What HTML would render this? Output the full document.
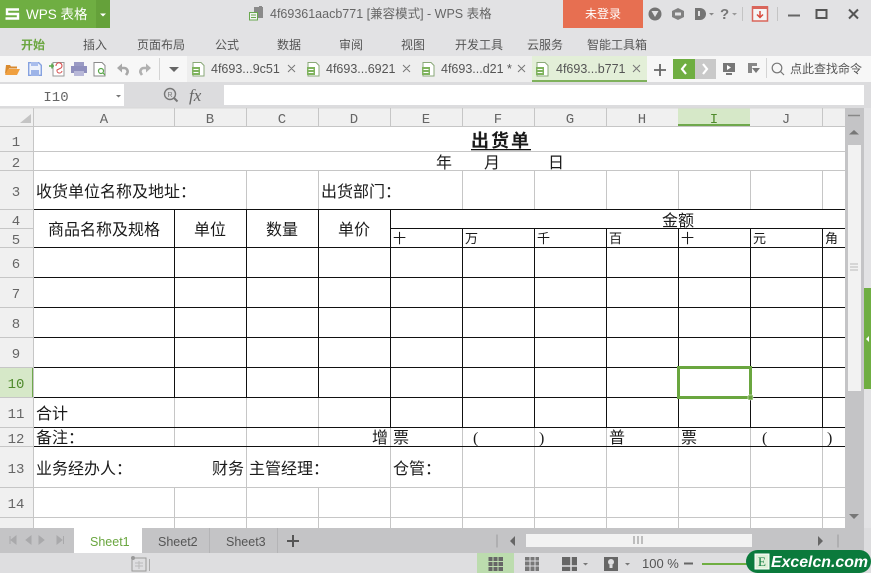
<!DOCTYPE html>
<html lang="zh-CN"><head><meta charset="utf-8"><style>
html,body{margin:0;padding:0;background:#e2e2e4}
svg{display:block}
.s{font-family:"Liberation Sans","Noto Sans CJK SC",sans-serif}
.c{font-family:"Liberation Serif","WenQuanYi Zen Hei","Noto Sans CJK SC",sans-serif;font-size:16px;fill:#1a1a1a}
.m{font-family:"Liberation Mono",monospace;fill:#666;font-size:14px;text-anchor:middle}
.rb{font-family:"Liberation Sans","Noto Sans CJK SC",sans-serif;font-size:12px;fill:#555}
.tab{font-family:"Liberation Sans",sans-serif;font-size:12.5px;fill:#555}
.st{font-family:"Liberation Sans",sans-serif;font-size:12.5px;fill:#555}
.g line{stroke:#c6c6c6;stroke-width:1}
.k line{stroke:#111;stroke-width:1}
</style></head><body>
<svg width="871" height="573" viewBox="0 0 871 573" xmlns="http://www.w3.org/2000/svg">
<rect width="871" height="573" fill="#e2e2e4"/>
<!-- title -->
<rect width="110" height="28" fill="#6fae42"/><rect x="96" width="14" height="28" fill="#65a13a"/>
<path d="M19 9.500H7v4.500h11v4.500H5.500" fill="none" stroke="#fff" stroke-width="2.400"/>
<text x="26" y="19" class="s" font-size="13.500" fill="#fff">WPS 表格</text>
<path d="M100 13.500h6l-3 3z" fill="#fff"/>
<path d="M254 7h5v-1h3v1h1v11h-9z" fill="#8a8a8a"/><rect x="249.500" y="12.500" width="8" height="7.500" fill="#f4f4f4" stroke="#6aa84f"/><path d="M251 15h5M251 17.500h5" stroke="#6aa84f"/>
<text x="270" y="18" class="s" font-size="12.500" fill="#666">4f69361aacb771 [兼容模式] - WPS 表格</text>
<rect x="563" width="80" height="28" fill="#e76f51"/>
<text x="585" y="18" class="s" font-size="12" fill="#fff">未登录</text>
<circle cx="655" cy="14" r="6.500" fill="#747474"/><path d="M651.500 11h7l-3.500 6z" fill="#e2e2e4"/>
<path d="M678 8l6 3v6l-6 3-6-3v-6z" fill="#808080"/><rect x="675" y="12.500" width="6" height="3" fill="#e2e2e4"/>
<path d="M695 8h5a6 6 0 0 1 0 12h-5z" fill="#747474"/><path d="M699 11v5" stroke="#e2e2e4" stroke-width="2"/><path d="M709 13h5l-2.500 2.500z" fill="#888"/>
<text x="720" y="19" class="s" font-size="15" font-weight="bold" fill="#777">?</text><path d="M732 13h5l-2.500 2.500z" fill="#999"/>
<path d="M742.500 7v14" stroke="#c4c4c4"/>
<rect x="752.500" y="7" width="15" height="14" fill="#f5f5f5" stroke="#d9655a" stroke-width="1.500"/><rect x="752" y="6" width="16" height="3" fill="#d9655a"/><path d="M760 11v6M757 14.500l3 3 3-3" fill="none" stroke="#d9483b" stroke-width="1.500"/>
<path d="M777.500 7v14" stroke="#c4c4c4"/>
<path d="M788 15.500h12" stroke="#666" stroke-width="2"/>
<rect x="816.500" y="10" width="10" height="8" fill="none" stroke="#555" stroke-width="2"/>
<path d="M849 9.500l9 9M858 9.500l-9 9" stroke="#555" stroke-width="2"/>
<!-- ribbon -->
<g class="rb"><text x="21" y="49" style="fill:#6aa63f;font-weight:bold">开始</text>
<text x="83" y="49">插入</text><text x="137" y="49">页面布局</text><text x="215" y="49">公式</text><text x="277" y="49">数据</text><text x="339" y="49">审阅</text><text x="401" y="49">视图</text><text x="455" y="49">开发工具</text><text x="527" y="49">云服务</text><text x="587" y="49">智能工具箱</text></g>
<!-- toolbar -->
<rect y="56" width="871" height="26" fill="#f7f7f7"/>
<rect x="187" y="56" width="345" height="26" fill="#eeeeee"/>
<rect x="647" y="56" width="224" height="26" fill="#f7f7f7"/>
<rect x="532" y="56" width="115" height="26" fill="#e3efd8"/><rect x="532" y="80" width="115" height="2" fill="#7fb15c"/>
<path d="M6 65h4l1 1.500h6v2H9l-2 5H5z" fill="#d98a2e"/><path d="M8 69h12l-3 6H5z" fill="#f0a040"/>
<path d="M28.700 62.700h10l2.600 2.600V75.300H28.700z" fill="#eef2fb" stroke="#86a2e0" stroke-width="1.400"/><rect x="31" y="62" width="7" height="4" fill="#a9bdec"/><rect x="31" y="70" width="8" height="6" fill="#9db4e8"/>
<path d="M53 62.500h11V76H53z" fill="#fff" stroke="#999"/><path d="M49 66h5M52 63.500v5" stroke="#5aa84a" stroke-width="1.500"/><path d="M56 66a3 3 0 1 1 5 2l-4 2a2.500 2.500 0 1 0 5 1" fill="none" stroke="#d64a4a"/>
<rect x="74" y="62" width="10" height="4" fill="#9a9ac4"/><rect x="71" y="66" width="16" height="7" fill="#8f8fbd"/><rect x="74" y="71" width="10" height="5" fill="#b8b8d8"/>
<path d="M94 62.500h8l3 3V76H94z" fill="#fff" stroke="#8a8a8a"/><circle cx="101" cy="71" r="2.500" fill="none" stroke="#5aa84a" stroke-width="1.200"/><path d="M103 73l2 2" stroke="#5aa84a" stroke-width="1.200"/>
<path d="M117 68l5-4.500v9z" fill="#a8a8a8"/><path d="M121 68h3a3.500 3.500 0 0 1 3 5.500l-1 1.500" fill="none" stroke="#a8a8a8" stroke-width="2.600"/>
<path d="M151 68l-5-4.500v9z" fill="#b0b0b0"/><path d="M147 68h-3a3.500 3.500 0 0 0-3 5.500l1 1.500" fill="none" stroke="#b0b0b0" stroke-width="2.600"/>
<path d="M159.500 58v22" stroke="#d4d4d4"/>
<path d="M169 67h10l-5 5z" fill="#666"/>
<g id="ti"><path d="M193 62.500h8l3 3V76h-11z" fill="#fff" stroke="#8aa878"/><rect x="192" y="67" width="8" height="8" fill="#7fb35e"/><path d="M193.500 69.500h5M193.500 72.500h5" stroke="#fff"/></g>
<use href="#ti" x="115"/><use href="#ti" x="230"/><use href="#ti" x="344"/>
<g class="tab"><text x="211" y="73">4f693...9c51</text><text x="326" y="73">4f693...6921</text><text x="441" y="73">4f693...d21 *</text><text x="556" y="73">4f693...b771</text></g>
<g stroke="#777" fill="none"><path d="M288 65l7 7M295 65l-7 7M403 65l7 7M410 65l-7 7M518 65l7 7M525 65l-7 7M633 65l7 7M640 65l-7 7"/></g>
<path d="M654 70h12M660 64v12" stroke="#666" stroke-width="1.800"/>
<rect x="673" y="59" width="22" height="20" fill="#6fae42"/><rect x="695" y="59" width="21" height="20" fill="#c9c9c9"/>
<path d="M686 64l-4 5 4 5" fill="none" stroke="#fff" stroke-width="2.200"/><path d="M703 64l4 5-4 5" fill="none" stroke="#fff" stroke-width="2.200"/>
<rect x="723" y="63" width="12" height="9" fill="#777"/><path d="M727 65l4 2.500-4 2.500z" fill="#fff"/><rect x="726" y="73" width="6" height="2" fill="#777"/>
<path d="M748 63h9v3h-5v7h-4z" fill="#888"/><path d="M752 68h8l-4 5z" fill="#777"/>
<path d="M766.500 58v20" stroke="#d4d4d4"/>
<circle cx="777" cy="68" r="4.800" fill="none" stroke="#777" stroke-width="1.200"/><path d="M780.500 71.500l3.500 3.500" stroke="#777" stroke-width="1.200"/>
<text x="790" y="73" class="s" font-size="12" fill="#555">点此查找命令</text>
<!-- formula -->
<rect y="82" width="871" height="26" fill="#dcdcde"/>
<rect y="84" width="124" height="22" fill="#fff"/><rect x="224" y="85" width="640" height="20" fill="#fff"/>
<text x="56" y="101" class="m">I10</text>
<path d="M116 95h5l-2.500 2.500z" fill="#777"/>
<circle cx="170" cy="94" r="5.500" fill="none" stroke="#777" stroke-width="1.400"/><path d="M174 98l3.500 3.500" stroke="#777" stroke-width="2"/><text x="170" y="97" font-size="7" text-anchor="middle" fill="#777" class="s">R</text>
<text x="189" y="101" font-family="Liberation Serif" font-style="italic" font-size="17" fill="#666">fx</text>
<!-- sheet -->
<rect y="108" width="845" height="420" fill="#fff"/>
<rect y="108" width="845" height="18" fill="#f0f0f0"/><rect y="126" width="33" height="402" fill="#f0f0f0"/>
<rect x="678" y="108" width="72" height="18" fill="#d6e8c8"/><rect x="678" y="124" width="72" height="2" fill="#6fa84c"/>
<rect y="368" width="33" height="30" fill="#d6e8c8"/><rect x="32" y="367" width="2" height="31" fill="#6fa84c"/>
<path d="M31 114v9H20z" fill="#c4c4c4"/>
<g class="g">
<line x1="0" x2="845" y1="108" y2="108" style="stroke:#d8d8d8"/>
<line x1="0" x2="845" y1="126.500" y2="126.500"/>
<line x1="33.500" x2="33.500" y1="108" y2="528"/>
<line x1="174.500" x2="174.500" y1="108" y2="126"/><line x1="246.500" x2="246.500" y1="108" y2="126"/><line x1="318.500" x2="318.500" y1="108" y2="126"/><line x1="390.500" x2="390.500" y1="108" y2="126"/><line x1="462.500" x2="462.500" y1="108" y2="126"/><line x1="534.500" x2="534.500" y1="108" y2="126"/><line x1="606.500" x2="606.500" y1="108" y2="126"/><line x1="822.500" x2="822.500" y1="108" y2="126"/>
<line x1="0" x2="845" y1="151.500" y2="151.500"/><line x1="0" x2="845" y1="170.500" y2="170.500"/><line x1="0" x2="845" y1="487.500" y2="487.500"/><line x1="0" x2="845" y1="517.500" y2="517.500"/>
<line x1="0" x2="33" y1="209.500" y2="209.500"/><line x1="0" x2="33" y1="228.500" y2="228.500"/><line x1="0" x2="33" y1="247.500" y2="247.500"/><line x1="0" x2="33" y1="277.500" y2="277.500"/><line x1="0" x2="33" y1="307.500" y2="307.500"/><line x1="0" x2="33" y1="337.500" y2="337.500"/><line x1="0" x2="33" y1="367.500" y2="367.500"/><line x1="0" x2="33" y1="397.500" y2="397.500"/><line x1="0" x2="33" y1="427.500" y2="427.500"/><line x1="0" x2="33" y1="446.500" y2="446.500"/>
<line x1="246.500" x2="246.500" y1="171" y2="209"/><line x1="318.500" x2="318.500" y1="171" y2="209"/><line x1="462.500" x2="462.500" y1="171" y2="209"/><line x1="534.500" x2="534.500" y1="171" y2="209"/><line x1="606.500" x2="606.500" y1="171" y2="209"/><line x1="678.500" x2="678.500" y1="171" y2="209"/><line x1="750.500" x2="750.500" y1="171" y2="209"/><line x1="822.500" x2="822.500" y1="171" y2="209"/>
<line x1="174.500" x2="174.500" y1="398" y2="446"/><line x1="246.500" x2="246.500" y1="398" y2="446"/><line x1="318.500" x2="318.500" y1="398" y2="446"/>
<line x1="390.500" x2="390.500" y1="428" y2="446"/><line x1="462.500" x2="462.500" y1="428" y2="446"/><line x1="534.500" x2="534.500" y1="428" y2="446"/><line x1="606.500" x2="606.500" y1="428" y2="446"/><line x1="678.500" x2="678.500" y1="428" y2="446"/><line x1="750.500" x2="750.500" y1="428" y2="446"/><line x1="822.500" x2="822.500" y1="428" y2="446"/>
<line x1="246.500" x2="246.500" y1="447" y2="487"/><line x1="390.500" x2="390.500" y1="447" y2="487"/><line x1="462.500" x2="462.500" y1="447" y2="487"/><line x1="534.500" x2="534.500" y1="447" y2="487"/><line x1="606.500" x2="606.500" y1="447" y2="487"/><line x1="678.500" x2="678.500" y1="447" y2="487"/><line x1="750.500" x2="750.500" y1="447" y2="487"/><line x1="822.500" x2="822.500" y1="447" y2="487"/>
<line x1="174.500" x2="174.500" y1="488" y2="528"/><line x1="246.500" x2="246.500" y1="488" y2="528"/><line x1="318.500" x2="318.500" y1="488" y2="528"/><line x1="390.500" x2="390.500" y1="488" y2="528"/><line x1="462.500" x2="462.500" y1="488" y2="528"/><line x1="534.500" x2="534.500" y1="488" y2="528"/><line x1="606.500" x2="606.500" y1="488" y2="528"/><line x1="678.500" x2="678.500" y1="488" y2="528"/><line x1="750.500" x2="750.500" y1="488" y2="528"/><line x1="822.500" x2="822.500" y1="488" y2="528"/>
</g>
<g class="k">
<line x1="34" x2="845" y1="209.500" y2="209.500"/><line x1="390" x2="845" y1="228.500" y2="228.500"/><line x1="34" x2="845" y1="247.500" y2="247.500"/>
<line x1="34" x2="845" y1="277.500" y2="277.500"/><line x1="34" x2="845" y1="307.500" y2="307.500"/><line x1="34" x2="845" y1="337.500" y2="337.500"/><line x1="34" x2="845" y1="367.500" y2="367.500"/><line x1="34" x2="845" y1="397.500" y2="397.500"/><line x1="34" x2="845" y1="427.500" y2="427.500"/><line x1="34" x2="845" y1="446.500" y2="446.500"/>
<line x1="174.500" x2="174.500" y1="209" y2="398"/><line x1="246.500" x2="246.500" y1="209" y2="398"/><line x1="318.500" x2="318.500" y1="209" y2="398"/><line x1="390.500" x2="390.500" y1="209" y2="428"/>
<line x1="462.500" x2="462.500" y1="228" y2="428"/><line x1="534.500" x2="534.500" y1="228" y2="428"/><line x1="606.500" x2="606.500" y1="228" y2="428"/><line x1="678.500" x2="678.500" y1="228" y2="428"/><line x1="750.500" x2="750.500" y1="228" y2="428"/><line x1="822.500" x2="822.500" y1="228" y2="428"/>
</g>
<rect x="678.500" y="367.500" width="72" height="30" fill="none" stroke="#6aa63f" stroke-width="3"/>
<rect x="748" y="395" width="5" height="5" fill="#6aa63f" stroke="#fff" stroke-width="0.500"/>
<!-- headers -->
<g class="m"><text x="104" y="123">A</text><text x="210" y="123">B</text><text x="282" y="123">C</text><text x="354" y="123">D</text><text x="426" y="123">E</text><text x="498" y="123">F</text><text x="570" y="123">G</text><text x="642" y="123">H</text><text x="714" y="123" style="fill:#4f8a2c">I</text><text x="786" y="123">J</text>
<text x="16" y="146">1</text><text x="16" y="167">2</text><text x="16" y="196">3</text><text x="16" y="225">4</text><text x="16" y="244">5</text><text x="16" y="268">6</text><text x="16" y="298">7</text><text x="16" y="328">8</text><text x="16" y="358">9</text><text x="16" y="388" style="fill:#4f8a2c">10</text><text x="16" y="418">11</text><text x="16" y="443">12</text><text x="16" y="473">13</text><text x="16" y="508">14</text></g>
<!-- cells -->
<g class="c">
<text x="471" y="147" style="font-size:18px;font-weight:bold;letter-spacing:2px">出货单</text><rect x="471" y="149" width="60" height="1.300" fill="#111"/>
<text x="436" y="168">年</text><text x="484" y="168">月</text><text x="548" y="168">日</text>
<text x="36" y="197">收货单位名称及地址：</text><text x="321" y="197">出货部门：</text>
<text x="48" y="235">商品名称及规格</text><text x="194" y="235">单位</text><text x="266" y="235">数量</text><text x="338" y="235">单价</text>
<text x="662" y="226">金额</text>
<g style="font-size:13px"><text x="393" y="243">十</text><text x="465" y="243">万</text><text x="537" y="243">千</text><text x="609" y="243">百</text><text x="681" y="243">十</text><text x="753" y="243">元</text><text x="825" y="243">角</text></g>
<text x="36" y="419">合计</text>
<text x="36" y="443">备注：</text><text x="372" y="443">增</text><text x="393" y="443">票</text>
<text x="473" y="443">(</text><text x="539" y="443">)</text><text x="609" y="443">普</text><text x="681" y="443">票</text><text x="762" y="443">(</text><text x="827" y="443">)</text>
<text x="36" y="474">业务经办人：</text><text x="212" y="474">财务</text><text x="249" y="474">主管经理：</text><text x="393" y="474">仓管：</text>
</g>
<!-- v scrollbar -->
<rect x="845" y="108" width="19" height="420" fill="#c4c4c6"/>
<rect x="848" y="145" width="13" height="246" fill="#f2f2f2"/>
<path d="M848 115.500h12" stroke="#888" stroke-width="1.500"/>
<path d="M854 130l-5 4.500h10z" fill="#777"/>
<path d="M849 514h10l-5 5z" fill="#777"/>
<path d="M850 264h8M850 267h8M850 270h8" stroke="#bbb"/>
<rect x="864" y="288" width="7" height="101" fill="#6fae42"/><path d="M869 336l-3 3 3 3z" fill="#fff"/>
<!-- sheet tabs -->
<rect y="528" width="864" height="25" fill="#c4c4c6"/>
<rect x="74" y="528" width="68" height="25" fill="#fff"/>
<path d="M10 536v8M16 536l-5 4 5 4zM31 536l-5 4 5 4zM39 536l5 4-5 4zM57 536l5 4-5 4zM63.500 536v8" fill="#a9a9ab" stroke="#a9a9ab"/>
<text x="90" y="546" class="st" style="fill:#6aa63f">Sheet1</text><text x="158" y="546" class="st">Sheet2</text><text x="226" y="546" class="st">Sheet3</text>
<path d="M209.500 528v25M277.500 528v25" stroke="#b4b4b6"/>
<path d="M287 541h12M293 535v12" stroke="#555" stroke-width="2"/>
<path d="M497 534.500v13M838 534.500v13" stroke="#a8a8aa" stroke-width="1.500"/>
<path d="M515 536l-5 5 5 5zM818 536l5 5-5 5z" fill="#666"/>
<rect x="526" y="534" width="226" height="13" fill="#f2f2f2"/>
<path d="M634 536v8M638 536v8M642 536v8" stroke="#888"/>
<rect x="864" y="528" width="7" height="25" fill="#dcdcde"/>
<!-- status -->
<rect y="553" width="871" height="20" fill="#dedee0"/>
<rect x="132" y="558" width="14" height="13" fill="none" stroke="#999"/><path d="M135 563h8M135 566h8M139 561v8" stroke="#bbb"/><circle cx="133" cy="558" r="2" fill="#999"/><path d="M149.500 559v12" stroke="#aaa"/>
<rect x="477" y="553" width="37" height="20" fill="#bcdcae"/>
<g fill="#666"><rect x="488" y="557" width="15" height="4"/><rect x="488" y="562" width="15" height="4"/><rect x="488" y="567" width="15" height="4"/></g>
<path d="M488 557v14M493 557v14M498 557v14" stroke="#bcdcae"/>
<rect x="525" y="557" width="14" height="14" fill="#777"/><path d="M525 561h14M525 566h14M530 557v14M535 557v14" stroke="#dedee0"/>
<rect x="562" y="557" width="15" height="14" fill="#666"/><path d="M571 557v14M562 566h15" stroke="#dedee0" stroke-width="1.500"/><path d="M583 563h5l-2.500 2.500z" fill="#777"/>
<rect x="604" y="557" width="14" height="14" fill="#666"/><circle cx="611" cy="562" r="3" fill="#dedee0"/><rect x="609.500" y="565" width="3" height="3" fill="#dedee0"/><path d="M625 563h5l-2.500 2.500z" fill="#777"/>
<text x="642" y="568" class="st" style="font-size:13px">100 %</text>
<path d="M684 563.500h9" stroke="#666" stroke-width="2"/>
<path d="M702 564h50" stroke="#6fae42" stroke-width="2"/>
<!-- watermark -->
<rect x="746" y="550" width="125" height="23" rx="11.500" fill="#0b7a3c"/>
<rect x="755" y="554" width="14" height="15" fill="#dff0d8" stroke="#fff"/>
<text x="762" y="566" text-anchor="middle" font-family="Liberation Serif" font-size="13" fill="#0b7a3c">E</text>
<text x="771" y="567" font-family="Liberation Sans" font-weight="bold" font-style="italic" font-size="15.500" fill="#fff" textLength="97" lengthAdjust="spacingAndGlyphs">Excelcn.com</text>
</svg>
</body></html>
